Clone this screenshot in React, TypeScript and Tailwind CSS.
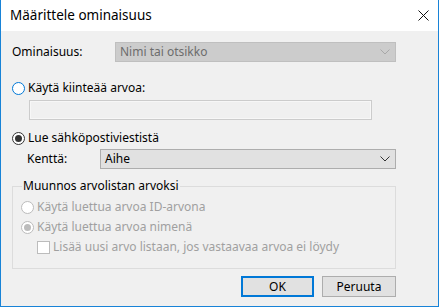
import React from 'react'

function Chevron({ color }: { color: string }) {
  return (
    <svg width="10" height="6" viewBox="0 0 10 6" className="shrink-0">
      <path d="M0.5 0.5 L5 5 L9.5 0.5" fill="none" stroke={color} strokeWidth="1" />
    </svg>
  )
}

function Radio({
  checked,
  disabled,
  focus,
}: {
  checked?: boolean
  disabled?: boolean
  focus?: boolean
}) {
  const ring = disabled ? 'border-[#bcbcbc]' : focus ? 'border-[#0078d7]' : 'border-[#333333]'
  return (
    <span
      className={`w-[13px] h-[13px] rounded-full border bg-white flex items-center justify-center shrink-0 ${ring}`}
    >
      {checked && (
        <span
          className={`w-[7px] h-[7px] rounded-full ${disabled ? 'bg-[#bcbcbc]' : 'bg-[#333333]'}`}
        />
      )}
    </span>
  )
}

export default function App() {
  return (
    <div
      className="w-[439px] h-[307px] bg-[#f0f0f0] border-l border-r border-b border-[#1883d7] flex flex-col text-[12px] text-black leading-none"
      style={{ fontFamily: '"Segoe UI", "Noto Sans", "Liberation Sans", sans-serif' }}
    >
      {/* title bar */}
      <div className="h-[31px] bg-white flex items-center justify-between pl-[9px] pr-[9px] shrink-0">
        <span className="text-[13.5px]">Määrittele ominaisuus</span>
        <svg width="11" height="11" viewBox="0 0 11 11">
          <path d="M0.5 0.5 L10.5 10.5 M10.5 0.5 L0.5 10.5" stroke="#111" strokeWidth="1" />
        </svg>
      </div>

      <div className="flex flex-col pl-[11px] pr-[42px]">
        {/* Ominaisuus */}
        <div className="flex items-center mt-[11px] h-[20px]">
          <span className="w-[103px]">Ominaisuus:</span>
          <div className="flex-1 h-[20px] bg-[#cccccc] border border-[#bfbfbf] flex items-center justify-between pl-[4px] pr-[5px] text-[#6d6d6d]">
            <span>Nimi tai otsikko</span>
            <Chevron color="#a8a8a8" />
          </div>
        </div>

        {/* fixed value */}
        <div className="flex items-center gap-[3px] mt-[19px] h-[14px]">
          <Radio focus />
          <span>Käytä kiinteää arvoa:</span>
        </div>
        <div className="ml-[17px] mr-[24px] mt-[5px] h-[20px] border border-[#cccccc] bg-[#f0f0f0] shadow-[inset_0_0_0_1px_#f7f7f7]" />

        {/* from email */}
        <div className="flex items-center gap-[3px] mt-[11px] h-[14px]">
          <Radio checked />
          <span>Lue sähköpostiviestistä</span>
        </div>
        <div className="flex items-center mt-[4px] h-[20px]">
          <span className="w-[88px] pl-[15px]">Kenttä:</span>
          <div className="flex-1 h-[20px] bg-[#e1e1e1] border border-[#adadad] flex items-center justify-between pl-[4px] pr-[5px]">
            <span>Aihe</span>
            <Chevron color="#333333" />
          </div>
        </div>

        {/* group */}
        <fieldset className="mt-[11px] border border-[#dcdcdc] h-[89px] pl-[8px] pr-[8px]">
          <legend className="px-[1px] ml-[1px]">Muunnos arvolistan arvoksi</legend>
          <div className="flex flex-col text-[#a0a0a0]">
            <div className="flex items-center gap-[3px] mt-[8px] h-[14px]">
              <Radio disabled />
              <span>Käytä luettua arvoa ID-arvona</span>
            </div>
            <div className="flex items-center gap-[3px] mt-[6px] h-[14px]">
              <Radio checked disabled />
              <span>Käytä luettua arvoa nimenä</span>
            </div>
            <div className="flex items-center gap-[3px] mt-[6px] h-[14px] pl-[16px]">
              <span className="w-[13px] h-[13px] border border-[#bcbcbc] bg-white shrink-0" />
              <span>Lisää uusi arvo listaan, jos vastaavaa arvoa ei löydy</span>
            </div>
          </div>
        </fieldset>

        {/* buttons */}
        <div className="flex justify-end gap-[8px] mt-[7px]">
          <button className="w-[73px] h-[21px] bg-[#e1e1e1] border-2 border-[#0078d7] flex items-center justify-center">
            OK
          </button>
          <button className="w-[74px] h-[21px] bg-[#e1e1e1] border border-[#adadad] flex items-center justify-center">
            Peruuta
          </button>
        </div>
      </div>
    </div>
  )
}
